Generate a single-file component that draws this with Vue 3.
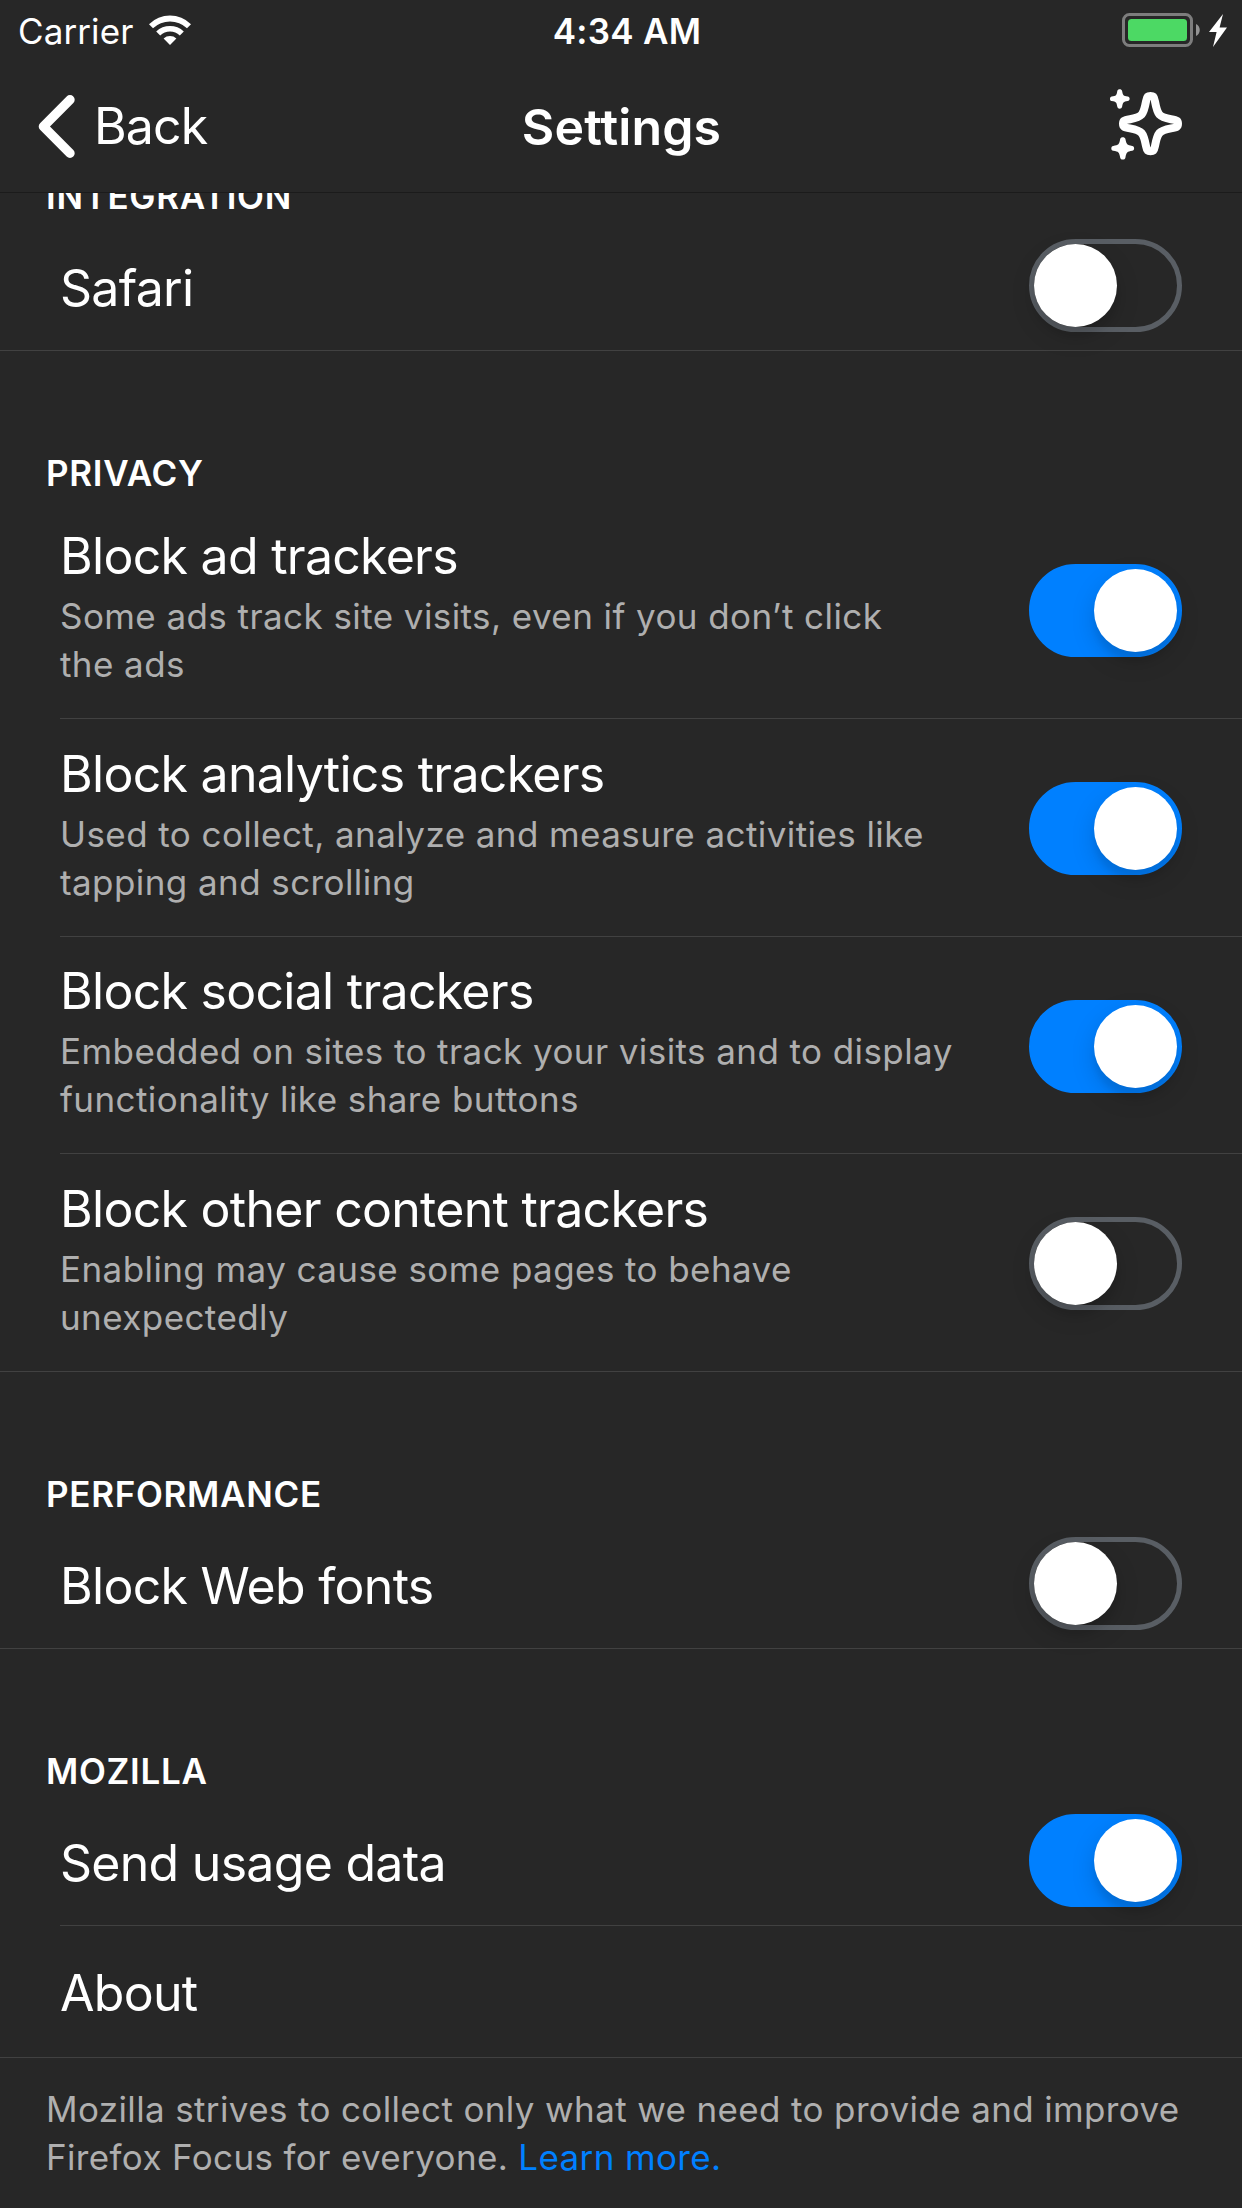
<script setup>
import { ref } from 'vue'

const sections = ref([
  { title: 'INTEGRATION', rows: [{ label: 'Safari', on: false }] },
  {
    title: 'PRIVACY',
    rows: [
      { label: 'Block ad trackers', detail: 'Some ads track site visits, even if you don’t click\nthe ads', on: true },
      { label: 'Block analytics trackers', detail: 'Used to collect, analyze and measure activities like\ntapping and scrolling', on: true },
      { label: 'Block social trackers', detail: 'Embedded on sites to track your visits and to display\nfunctionality like share buttons', on: true },
      { label: 'Block other content trackers', detail: 'Enabling may cause some pages to behave\nunexpectedly', on: false },
    ],
  },
  { title: 'PERFORMANCE', rows: [{ label: 'Block Web fonts', on: false }] },
  { title: 'MOZILLA', rows: [{ label: 'Send usage data', on: true }, { label: 'About' }] },
])

function toggle(row) {
  row.on = !row.on
}
</script>

<template>
  <div class="screen">
    <header class="top">
      <div class="status">
        <div class="carrier">
          <span>Carrier</span>
          <svg class="wifi" width="42" height="30" viewBox="0 0 42 30">
            <path d="M0 9.2A30 30 0 0 1 42 9.2L38 13.2A25 25 0 0 0 4 13.2Z" />
            <path d="M7.2 16.4A20 20 0 0 1 34.8 16.4L30.8 20.4A14.5 14.5 0 0 0 11.2 20.4Z" />
            <path d="M14.6 23.6A9.5 9.5 0 0 1 27.4 23.6L21 30Z" />
          </svg>
        </div>
        <span class="clock">4:34 AM</span>
        <div class="power">
          <svg width="106" height="34" viewBox="0 0 106 34">
            <rect x="1.5" y="1.5" width="68" height="31" rx="6" fill="none" stroke="#7d7d7d" stroke-width="3" />
            <rect x="6" y="6" width="59" height="22" rx="3.5" fill="#4cd964" />
            <path d="M74 11C79 13 79 21 74 23Z" fill="#939393" />
            <path d="M101 1L87 19H94.6L91 34L105 14.4H97.6Z" fill="#fff" />
          </svg>
        </div>
      </div>
      <nav class="nav">
        <button class="back">
          <svg width="37" height="63" viewBox="0 0 37 63">
            <path d="M32 4.8L5.4 31.5L32 58.2" fill="none" stroke="#fff" stroke-width="9.4" stroke-linecap="round" stroke-linejoin="round" />
          </svg>
          <span>Back</span>
        </button>
        <h1>Settings</h1>
        <button class="whats-new" aria-label="What's new">
          <svg width="72" height="72" viewBox="0 0 72 72">
            <path d="M36 12.5C37 7 38 7 40.5 7C43 7 44 7 45 12.5C47.5 26 49 28 61 30.2C67.5 31.4 68 32 68 34.8C68 37.6 67.5 38.2 61 39.4C49 41.6 47.5 43.6 45 57.1C44 62.3 43 62.3 40.5 62.3C38 62.3 37 62.3 36 57.1C33.5 43.6 32 41.6 20 39.4C13.5 38.2 13 37.6 13 34.8C13 32 13.5 31.4 20 30.2C32 28 33.5 26 36 12.5Z" fill="none" stroke="#fff" stroke-width="8" />
            <path d="M7.3 2C7.7 -0.5 11.7 -0.5 12.1 2C13 6.5 13.3 6.9 17.7 7.6C20.3 8 20.3 11.7 17.7 12.1C13.3 12.9 13 13.2 12.1 17.8C11.7 20.3 7.7 20.3 7.3 17.8C6.5 13.2 6.2 12.9 1.7 12.1C-0.6 11.7 -0.6 8 1.7 7.6C6.2 6.9 6.5 6.5 7.3 2Z" />
            <path d="M10.2 50C10.6 47.5 15 47.5 15.4 50C16.5 55.5 17 56 22.2 56.9C24.8 57.3 24.8 61.3 22.2 61.7C17 62.6 16.5 63 15.4 68.7C15 71.2 10.6 71.2 10.2 68.7C9.2 63 8.7 62.6 3.2 61.7C0.7 61.3 0.7 57.3 3.2 56.9C8.7 56 9.2 55.5 10.2 50Z" />
          </svg>
        </button>
      </nav>
    </header>

    <main class="list">
      <section v-for="section in sections" :key="section.title" class="section">
        <h2>{{ section.title }}</h2>
        <div class="rows">
          <div v-for="row in section.rows" :key="row.label" class="row" :class="{ detailed: row.detail, plain: row.on === undefined }">
            <div class="text">
              <div class="label">{{ row.label }}</div>
              <p v-if="row.detail" class="detail">{{ row.detail }}</p>
            </div>
            <button v-if="row.on !== undefined" class="switch" :class="{ on: row.on }" role="switch" :aria-checked="row.on" :aria-label="row.label" @click="toggle(row)">
              <span class="knob"></span>
            </button>
          </div>
        </div>
      </section>
      <p class="footnote">Mozilla strives to collect only what we need to provide and improve<br />Firefox Focus for everyone. <a>Learn more.</a></p>
    </main>
  </div>
</template>

<style>
body {
  background: #272727;
}
</style>

<style scoped>
.screen {
  width: 1242px;
  height: 2208px;
  overflow: hidden;
  display: flex;
  flex-direction: column;
  background: #272727;
  color: #fff;
  font-family: Inter, "Liberation Sans", sans-serif;
}
button {
  padding: 0;
  border: 0;
  background: none;
  color: inherit;
  font: inherit;
}
h1, h2, p {
  margin: 0;
}
svg {
  display: block;
  fill: #fff;
}
.top {
  flex: none;
  height: 193px;
  box-sizing: border-box;
  border-bottom: 1px solid #1b1b1b;
}
.status {
  height: 60px;
  display: grid;
  grid-template-columns: 1fr auto 1fr;
  font-size: 35px;
  line-height: 62px;
}
.carrier {
  display: flex;
  padding-left: 18px;
  gap: 16px;
  letter-spacing: 0.1px;
}
.wifi {
  margin-top: 15px;
}
.clock {
  padding-left: 12px;
  font-weight: 600;
  letter-spacing: 0.25px;
}
.power {
  display: flex;
  justify-content: flex-end;
  padding: 13px 14px 0 0;
}
.nav {
  height: 132px;
  display: grid;
  grid-template-columns: 1fr auto 1fr;
  align-items: center;
  font-size: 50px;
}
.back {
  display: flex;
  align-items: center;
  gap: 19px;
  padding-left: 38px;
  letter-spacing: -0.9px;
}
h1 {
  padding: 2px 0 0 1px;
  font-size: 50px;
  font-weight: 600;
  letter-spacing: 0.15px;
}
.whats-new {
  justify-self: end;
  margin: 0 60px 2px 0;
}
.list {
  flex: 1;
  min-height: 0;
  display: flex;
  flex-direction: column;
}
h2 {
  height: 145px;
  box-sizing: border-box;
  padding: 100px 0 0 46px;
  font-size: 35px;
  line-height: 44px;
  font-weight: 600;
  letter-spacing: 0.7px;
}
/* The first heading is scrolled partly under the navigation bar. */
.section:first-child h2 {
  height: 26px;
  padding-top: 0;
  line-height: 6px;
  overflow: hidden;
}
.row {
  display: flex;
  align-items: center;
  justify-content: space-between;
  height: 132px;
  box-sizing: border-box;
  margin-left: 60px;
  padding-right: 60px;
  border-bottom: 1px solid #414141;
}
.row:last-child {
  margin-left: 0;
  padding-left: 60px;
}
.text {
  padding-top: 6px;
}
.plain .text {
  padding-top: 2px;
}
.detailed .text {
  padding: 0 0 6px;
}
.label {
  font-size: 50px;
  line-height: 60px;
  letter-spacing: -0.72px;
  white-space: nowrap;
}
.row.detailed {
  height: 218px;
}
.row.detailed:first-child {
  height: 223px;
  padding-top: 5px;
}
.row.detailed:nth-child(3) {
  height: 217px;
}
.detail {
  margin-top: 6px;
  font-size: 35px;
  line-height: 48px;
  letter-spacing: 0.42px;
  white-space: pre;
  color: #afafaf;
}
.switch {
  flex: none;
  width: 153px;
  height: 93px;
  box-sizing: border-box;
  margin-top: 2px;
  border: 5px solid #595e64;
  border-radius: 47px;
  display: flex;
}
.switch.on {
  border-color: #0080ff;
  background: #0080ff;
  justify-content: flex-end;
}
.knob {
  width: 83px;
  height: 83px;
  border-radius: 50%;
  background: #fff;
  box-shadow: 0 9px 24px rgba(0, 0, 0, 0.15), 0 9px 6px rgba(0, 0, 0, 0.06);
}
.footnote {
  padding: 27px 0 0 46px;
  font-size: 35px;
  line-height: 48px;
  letter-spacing: 0.36px;
  white-space: nowrap;
  color: #afafaf;
}
.footnote a {
  color: #0080ff;
}
</style>
